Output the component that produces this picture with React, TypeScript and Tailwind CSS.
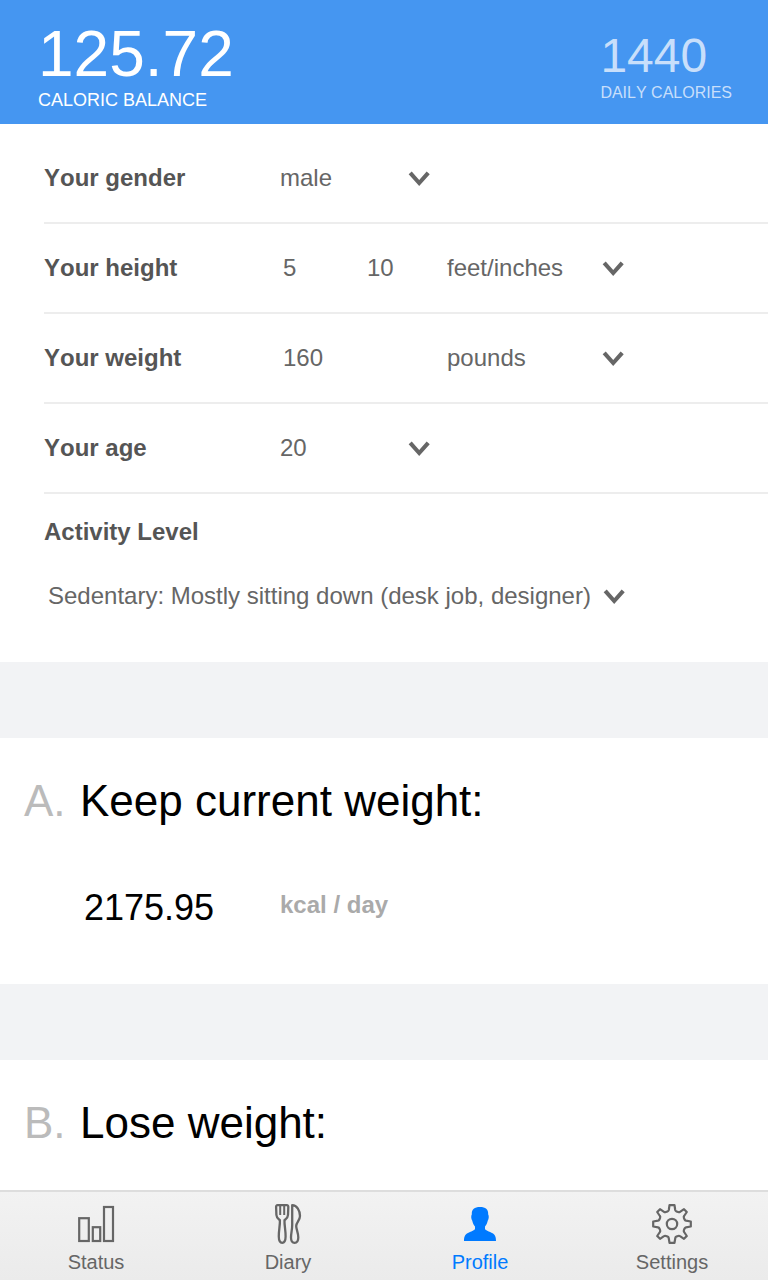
import type { ReactNode } from "react";

function Chevron() {
  return (
    <svg width="22" height="18" viewBox="0 0 22 18" fill="none" className="block shrink-0">
      <path d="M2.2 3.8 L11.2 14 L20.2 3.8" stroke="#666666" strokeWidth="4.1" />
    </svg>
  );
}

function Row({ label, children }: { label: string; children: ReactNode }) {
  return (
    <div className="ml-11 flex h-[90px] items-center border-b-2 border-[#ededed]">
      <div className="w-[236px] font-bold text-[#555555]">{label}</div>
      {children}
    </div>
  );
}

function StatusIcon() {
  return (
    <svg width="40" height="40" viewBox="0 0 40 40" fill="none" stroke="#666666" strokeWidth="2.2">
      <rect x="3.2" y="14.2" width="9.6" height="22.8" />
      <rect x="16.8" y="23.2" width="7.4" height="13.8" />
      <rect x="28" y="3" width="9" height="34" />
    </svg>
  );
}

function DiaryIcon() {
  return (
    <svg width="40" height="40" viewBox="0 0 40 40" fill="none" stroke="#666666" strokeWidth="2.3" strokeLinejoin="round">
      <path d="M9.6 1.2 H18.8 Q20.4 1.2 20.3 3 L20 11 C19.9 14 18 15 16.5 16.2 C16.2 21 17.8 27 17.6 32.5 C17.5 40.9 10.9 40.9 10.8 32.5 C10.6 27 12.2 21 11.9 16.2 C10.4 15 8.5 14 8.4 11 L8.1 3 Q8 1.2 9.6 1.2 Z" />
      <path d="M12.2 1 V11 M16.2 1 V11" strokeWidth="2" />
      <path d="M24.2 1.2 C29 1.2 32 6.5 32 12 C32 16.5 28.2 18.5 28.2 22 C28.2 25.5 30.4 29 30.3 33.5 C30.2 40.6 23 40.6 23 33.5 C23 29 24.2 26 24.2 21 Z" />
    </svg>
  );
}

function ProfileIcon() {
  return (
    <svg width="40" height="40" viewBox="0 0 40 40" fill="#007aff">
      <path d="M20 3 C25.5 3 28.4 5 28.2 10.5 C29.2 12 28.8 15 27.8 16.5 C27.2 19.5 26 21.5 25 22.5 V25.3 C26.5 27 29.5 27.7 32 29 C35 30.6 36 32.5 36 37 H4 C4 32.5 5 30.6 8 29 C10.5 27.7 13.5 27 15 25.3 V22.5 C14 21.5 12.8 19.5 12.2 16.5 C11.2 15 10.8 12 11.8 10.5 C11.6 5 14.5 3 20 3 Z" />
    </svg>
  );
}

function SettingsIcon() {
  return (
    <svg width="40" height="40" viewBox="0 0 40 40" fill="none" stroke="#666666" strokeWidth="2.2" strokeLinejoin="round">
      <path d="M17.5 1.2 H22.5 L23.2 6 Q23.5 7 24.5 7.4 L26.2 8.1 Q27.2 8.5 28 7.9 L32 5.2 L34.8 8 L32.1 12 Q31.5 12.8 31.9 13.8 L32.6 15.5 Q33 16.5 34 16.7 L38.8 17.5 V22.5 L34 23.3 Q33 23.5 32.6 24.5 L31.9 26.2 Q31.5 27.2 32.1 28 L34.8 32 L32 34.8 L28 32.1 Q27.2 31.5 26.2 31.9 L24.5 32.6 Q23.5 33 23.3 34 L22.5 38.8 H17.5 L16.7 34 Q16.5 33 15.5 32.6 L13.8 31.9 Q12.8 31.5 12 32.1 L8 34.8 L5.2 32 L7.9 28 Q8.5 27.2 8.1 26.2 L7.4 24.5 Q7 23.5 6 23.3 L1.2 22.5 V17.5 L6 16.7 Q7 16.5 7.4 15.5 L8.1 13.8 Q8.5 12.8 7.9 12 L5.2 8 L8 5.2 L12 7.9 Q12.8 8.5 13.8 8.1 L15.5 7.4 Q16.5 7 16.8 6 Z" />
      <circle cx="20" cy="20" r="5.2" />
    </svg>
  );
}

function Tab({ label, active, children }: { label: string; active?: boolean; children: ReactNode }) {
  return (
    <div className={`flex flex-1 flex-col items-center pt-3 text-xl leading-6 ${active ? "text-[#007aff]" : "text-[#666666]"}`}>
      {children}
      <span className="mt-[6px]">{label}</span>
    </div>
  );
}

export default function App() {
  return (
    <div className="flex h-[1280px] w-[768px] flex-col overflow-hidden bg-white font-['Liberation_Sans',Arial,sans-serif] text-2xl text-[#666666] [font-kerning:none]">
      <header className="flex h-[124px] shrink-0 justify-between bg-[#4596f1] pl-[38px] pr-9 text-white">
        <div className="pt-[21px]">
          <div className="text-[64px] leading-[66px]">125.72</div>
          <div className="pt-px text-lg leading-6">CALORIC BALANCE</div>
        </div>
        <div className="pt-[29px] text-[#c8dffb]">
          <div className="text-5xl leading-[54px]">1440</div>
          <div className="text-base leading-5">DAILY CALORIES</div>
        </div>
      </header>

      <section className="h-[538px] shrink-0 pt-[10px]">
        <Row label="Your gender">
          <span className="w-32">male</span>
          <Chevron />
        </Row>
        <Row label="Your height">
          <span className="w-[87px] pl-[3px]">5</span>
          <span className="w-20">10</span>
          <span className="w-[155px]">feet/inches</span>
          <Chevron />
        </Row>
        <Row label="Your weight">
          <span className="w-[167px] pl-[3px]">160</span>
          <span className="w-[155px]">pounds</span>
          <Chevron />
        </Row>
        <Row label="Your age">
          <span className="w-32">20</span>
          <Chevron />
        </Row>
        <div className="ml-11 pt-[22px] font-bold text-[#555555]">Activity Level</div>
        <div className="ml-12 mt-8 flex items-center">
          <span className="w-[555px] whitespace-nowrap">Sedentary: Mostly sitting down (desk job, designer)</span>
          <Chevron />
        </div>
      </section>

      <div className="h-[76px] shrink-0 bg-[#f2f3f5]" />

      <section className="h-[246px] shrink-0 pl-6 pt-[38px]">
        <h2 className="flex text-[44px] leading-[50px] text-black">
          <span className="w-14 text-[#bbbbbb]">A.</span>
          Keep current weight:
        </h2>
        <div className="mt-[61px] flex items-center pl-[60px]">
          <span className="w-[196px] text-4xl leading-[42px] text-black">2175.95</span>
          <span className="pb-1.5 font-bold text-[#aaaaaa]">kcal / day</span>
        </div>
      </section>

      <div className="h-[76px] shrink-0 bg-[#f2f3f5]" />

      <section className="h-[130px] shrink-0 pl-6 pt-[38px]">
        <h2 className="flex text-[44px] leading-[50px] text-black">
          <span className="w-14 text-[#bbbbbb]">B.</span>
          Lose weight:
        </h2>
      </section>

      <nav className="flex h-[90px] shrink-0 border-t-2 border-[#dddddd] bg-linear-to-b from-[#f2f2f2] to-[#ebebeb]">
        <Tab label="Status"><StatusIcon /></Tab>
        <Tab label="Diary"><DiaryIcon /></Tab>
        <Tab label="Profile" active><ProfileIcon /></Tab>
        <Tab label="Settings"><SettingsIcon /></Tab>
      </nav>
    </div>
  );
}
